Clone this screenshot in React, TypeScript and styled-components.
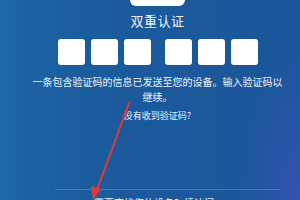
import styled, { createGlobalStyle } from "styled-components";

const GlobalStyle = createGlobalStyle`
  html, body {
    margin: 0;
    padding: 0;
    background: #1a5899;
  }
`;

const Screen = styled.div`
  position: relative;
  width: 300px;
  height: 200px;
  overflow: hidden;
  box-sizing: border-box;
  padding-left: 15px;
  display: flex;
  flex-direction: column;
  align-items: center;
  font-family: "Noto Sans CJK SC", "Noto Sans", sans-serif;
  color: #eef3fb;
  background:
    radial-gradient(ellipse 60px 160px at 300px 200px, rgba(70, 80, 190, 0.55), rgba(70, 80, 190, 0) 100%),
    linear-gradient(90deg, #1f6aaa 0px, #1c62a3 30px, #1a5a9c 120px, #1a579a 260px, #1c559c 300px);
`;

const Notch = styled.div`
  width: 55px;
  height: 6px;
  background: #ffffff;
  border-radius: 0 0 9px 9px;
`;

const Title = styled.div`
  margin-top: 7px;
  font-size: 13px;
  line-height: 16px;
  letter-spacing: 0.5px;
`;

const CodeRow = styled.div`
  margin-top: 10px;
  display: flex;
  gap: 14px;
`;

const CodeGroup = styled.div`
  display: flex;
  gap: 6px;
`;

const CodeBox = styled.div`
  width: 27px;
  height: 26px;
  background: #ffffff;
  border-radius: 3px;
`;

const Message = styled.div`
  margin-top: 9px;
  max-width: 258px;
  font-size: 10px;
  line-height: 15px;
  text-align: center;
`;

const Resend = styled.div`
  margin-top: 5px;
  font-size: 9px;
  line-height: 14px;
`;

const Footer = styled.div`
  margin-top: auto;
  align-self: stretch;
  margin-left: 40px;
  margin-right: 20px;
  border-top: 1px solid rgba(140, 180, 230, 0.35);
  padding-top: 6px;
  padding-left: 39px;
  height: 4px;
  font-size: 10px;
  line-height: 14px;
  white-space: nowrap;
`;

const Arrow = styled.svg`
  position: absolute;
  left: 0;
  top: 0;
  pointer-events: none;
`;

export default function App() {
  return (
    <>
      <GlobalStyle />
      <Screen>
        <Notch />
        <Title>双重认证</Title>
        <CodeRow>
          <CodeGroup>
            <CodeBox />
            <CodeBox />
            <CodeBox />
          </CodeGroup>
          <CodeGroup>
            <CodeBox />
            <CodeBox />
            <CodeBox />
          </CodeGroup>
        </CodeRow>
        <Message>一条包含验证码的信息已发送至您的设备。输入验证码以继续。</Message>
        <Resend>没有收到验证码?</Resend>
        <Footer>需要查找您的设备？请访问</Footer>
        <Arrow width="300" height="200" viewBox="0 0 300 200">
          <line x1="129" y1="103" x2="97" y2="190" stroke="#e8353a" strokeWidth="2" strokeLinecap="round" />
          <polygon points="93,200 91,186 101,189" fill="#e8353a" />
        </Arrow>
      </Screen>
    </>
  );
}
